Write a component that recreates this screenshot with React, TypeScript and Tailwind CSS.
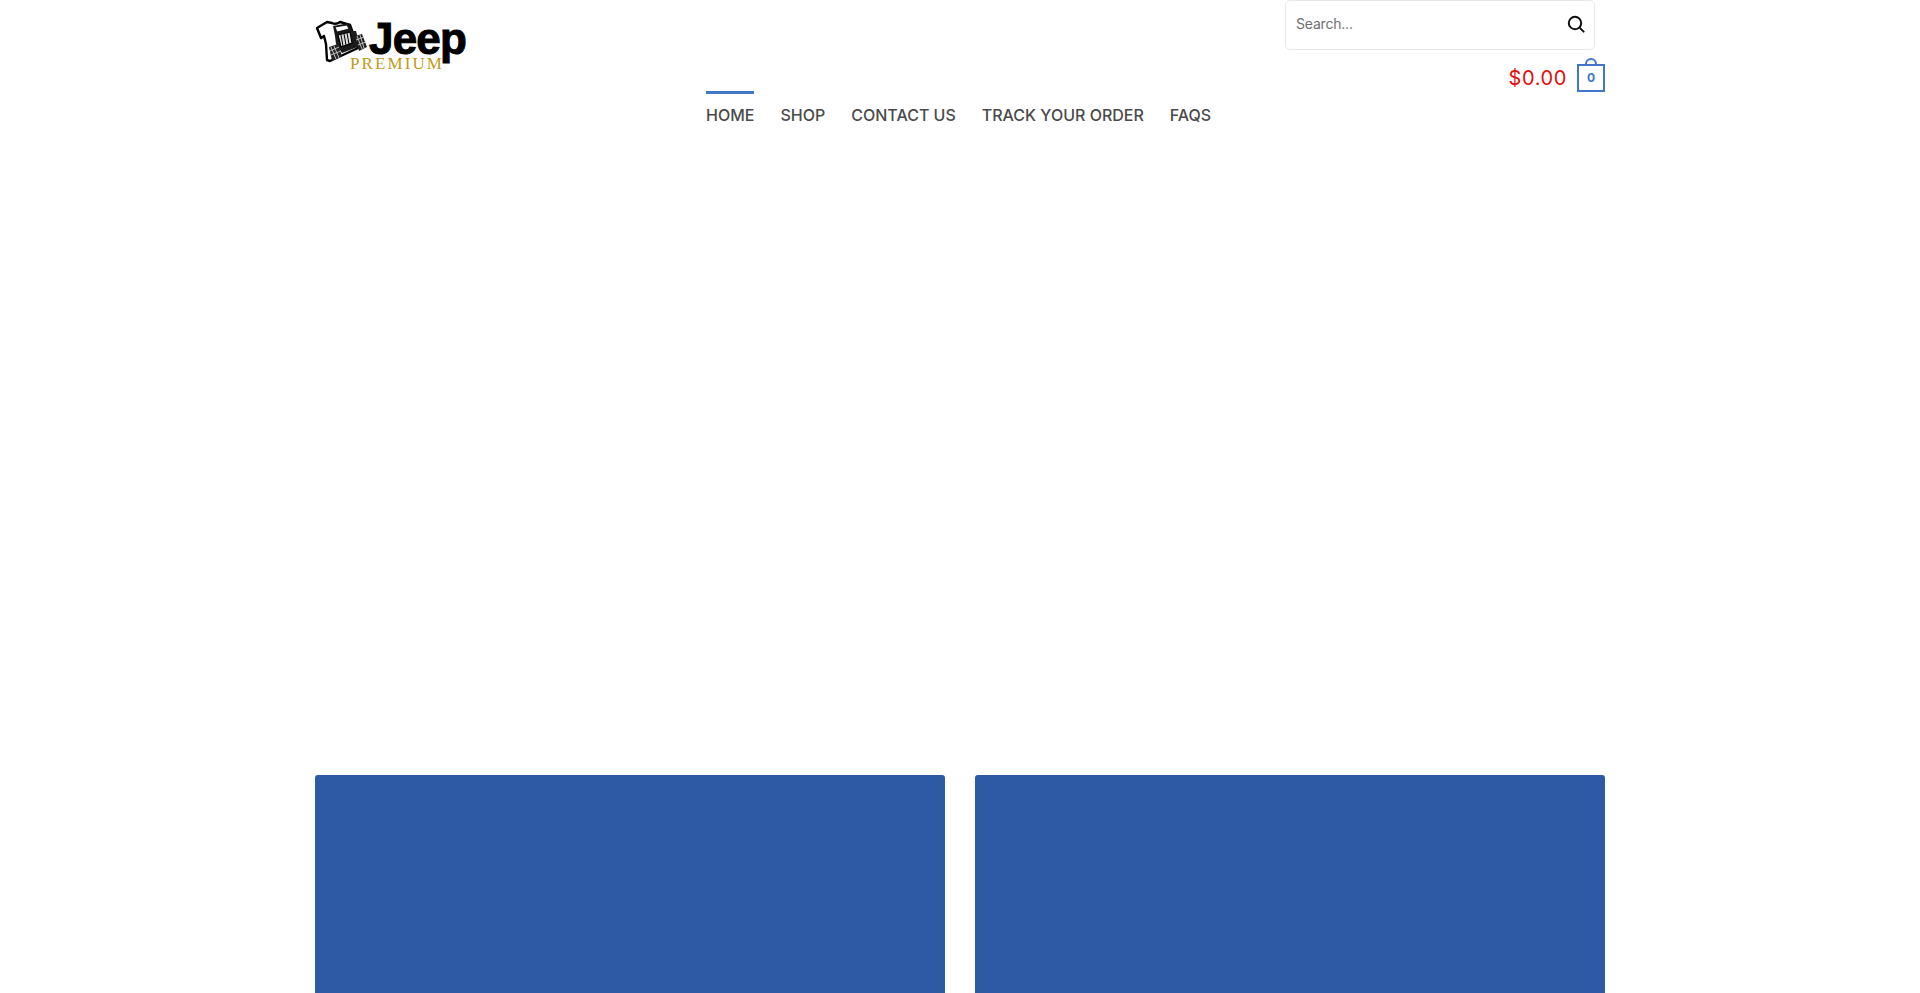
import React, { FC } from 'react'

const navItems = ['HOME', 'SHOP', 'CONTACT US', 'TRACK YOUR ORDER', 'FAQS']

// shirt with the jeep printed over it
const JeepShirt: FC = () => (
  <svg width="57" height="50" viewBox="3 0 57 50" className="absolute top-[-4px] left-0">
    <path
      d="M5 12 L15 6 L20 7 Q24 9 28 6 L38 9 L42 20 L46 32 L18 45 L15 44 L14 28 L12 20 L9 22 Z"
      fill="#fff"
      stroke="#000"
      strokeWidth="2.4"
      strokeLinejoin="round"
    />
    <path d="M21 10 L37 7 L40 15 L44 15 L48 30 L30 37 L24 28 L23 20 Z" fill="#1a1a1a" />
    <path d="M23 11 L35 9 L37 13 L25 16 Z" fill="#fff" stroke="#000" strokeWidth="0.8" />
    <path d="M26 19 L38 16 L40 27 L29 31 Z" fill="#d8d8d8" stroke="#000" strokeWidth="1.2" />
    <path d="M29 19 L31 30 M32 18 L34 29 M35 17 L37 28" stroke="#000" strokeWidth="1" />
    <path d="M17 31 L26 28 L30 40 L20 45 Z" fill="#222" />
    <path d="M19 31 L24 43 M22 30 L27 42 M18 35 L27 31 M19 39 L29 35" stroke="#ccc" strokeWidth="0.9" />
    <path d="M43 20 L50 18 L55 31 L47 35 Z" fill="#222" />
    <path d="M45 20 L50 33 M48 19 L52 32 M44 24 L52 21 M46 29 L54 26" stroke="#ccc" strokeWidth="0.9" />
  </svg>
)

const Logo: FC = () => (
  <div className="w-[391px] shrink-0 pt-[20px]">
    <div className="relative h-[50px] w-[155px]">
      <JeepShirt />
      <span className="absolute top-[1px] left-[54px] font-['Liberation_Sans',sans-serif] text-[44px] leading-[36px] font-bold tracking-[-0.8px] text-black [-webkit-text-stroke:1px_#000]">
        Jeep
      </span>
      <span className="absolute top-[38px] left-[35px] font-['Liberation_Serif',serif] text-[17px] leading-[12px] tracking-[2.1px] text-[#c09a1a]">
        PREMIUM
      </span>
    </div>
  </div>
)

const SearchBox: FC = () => (
  <div className="mr-[10px] flex h-[50px] w-[310px] items-center justify-between self-end rounded-[5px] border border-[#e8e8e8] pr-[9px] pl-[10px]">
    <span className="pb-[3px] text-[14px] tracking-[-0.2px] text-[#6f6f6f]">Search...</span>
    <svg width="18" height="18" viewBox="0 0 18 18" fill="none" stroke="#111" strokeWidth="2" className="mb-[2px]">
      <circle cx="8" cy="8" r="6.2" />
      <path d="M12.6 12.6 L16.6 16.6" strokeLinecap="round" />
    </svg>
  </div>
)

const Cart: FC = () => (
  <div className="mt-[9px] flex items-center justify-end gap-[10px]">
    <span className="pt-[6px] text-[20px] leading-[27px] tracking-[0.6px] text-[#e40d0d]">$0.00</span>
    <div className="relative mt-[5px] flex h-[28px] w-[28px] items-center justify-center border-[2px] border-[#4176c9]">
      <span className="text-[12px] font-bold text-[#4176c9]">0</span>
      <div className="absolute top-[-8px] left-[6px] h-[6px] w-[12px] rounded-t-full border-[2px] border-b-0 border-[#4176c9]" />
    </div>
  </div>
)

const Nav: FC = () => (
  <nav className="-mt-[1px] flex gap-[26px]">
    {navItems.map((item, i) => (
      <a
        key={item}
        className={`h-[44px] border-t-[3px] pt-[5px] text-[16px] leading-[32px] font-medium whitespace-nowrap text-[#4a4a4a] ${
          i === 0 ? 'border-[#4176c9]' : 'border-transparent'
        }`}
      >
        {item}
      </a>
    ))}
  </nav>
)

const App: FC = () => {
  return (
    <div className="h-[993px] overflow-hidden bg-white font-['Inter','Noto_Sans',sans-serif]">
      <div className="mx-auto w-[1290px]">
        <header className="flex">
          <Logo />
          <div className="flex flex-1 flex-col">
            <SearchBox />
            <Cart />
            <Nav />
          </div>
        </header>
        <div className="mt-[640px] grid grid-cols-2 gap-[30px]">
          <div className="h-[300px] rounded-t-[3px] bg-[#2d59a5]" />
          <div className="h-[300px] rounded-t-[3px] bg-[#2d59a5]" />
        </div>
      </div>
    </div>
  )
}

export default App
